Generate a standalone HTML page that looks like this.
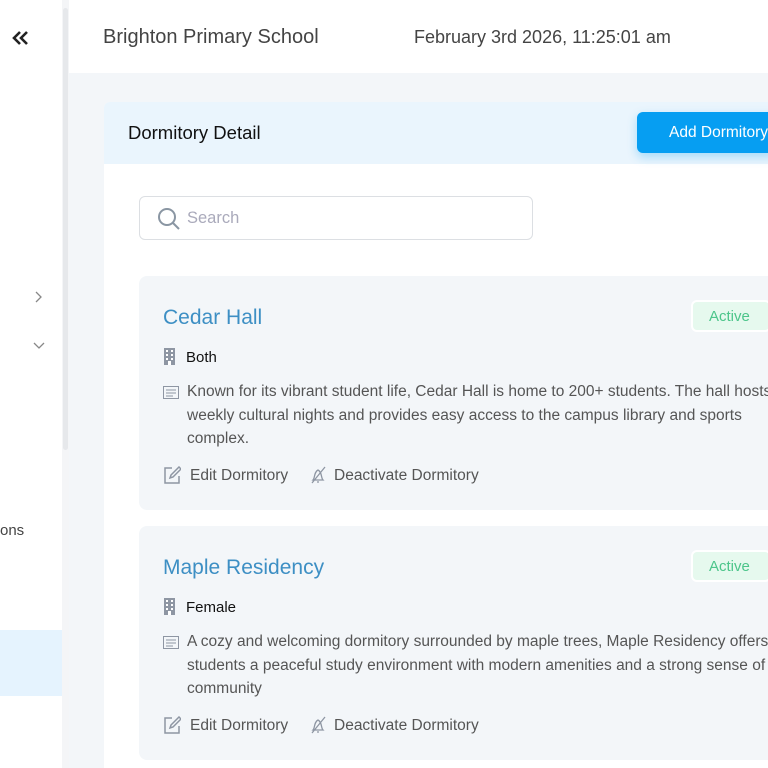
<!DOCTYPE html><html><head><style>
*{margin:0;padding:0;box-sizing:border-box}
html,body{width:768px;height:768px;overflow:hidden}
body{background:#f3f6f9;font-family:"Liberation Sans",sans-serif;position:relative}
.abs{position:absolute}
.side{left:0;top:0;width:62px;height:768px;background:#fff}
.sb{left:62px;top:0;width:7px;height:768px;background:#f4f5f7}
.sbt{left:63px;top:8px;width:5px;height:442px;background:#e6e8eb;border-radius:3px}
.hdr{left:69px;top:0;width:699px;height:73px;background:#fff}
.card{left:104px;top:102px;width:700px;height:666px;background:#fff;border-radius:6px 6px 0 0;overflow:hidden}
.ch{left:0;top:0;width:100%;height:62px;background:#eaf5fd}
.item{left:139px;width:660px;height:234px;background:#f3f6f9;border-radius:8px}
.t{font-size:21px;color:#3d8fc4;left:24px;top:30px}
.badge{left:552px;top:24px;width:80px;height:32px;background:#e6f9ee;border:2px solid #fff;border-radius:6px;color:#4cc58a;font-size:15px;padding:6px 0 0 16px}
.g{left:47px;top:73px;font-size:15px;color:#111}
.d{left:48px;top:104px;white-space:nowrap;font-size:15.5px;line-height:23.5px;color:#555}
.a{top:191px;font-size:15.5px;color:#555}
</style></head><body>
<div class="abs side"></div><div class="abs sb"></div><div class="abs sbt"></div>
<svg class="abs" style="left:11px;top:30px" width="18" height="16"><path d="M9 2L3 8l6 6M16 2l-6 6 6 6" stroke="#222" stroke-width="2.6" fill="none"/></svg>
<svg class="abs" style="left:34px;top:290px" width="10" height="14"><path d="M2 2l5 5-5 5" stroke="#888" stroke-width="1.3" fill="none"/></svg>
<svg class="abs" style="left:32px;top:341px" width="14" height="10"><path d="M2 2l5 5 5-5" stroke="#888" stroke-width="1.3" fill="none"/></svg>
<div class="abs" style="left:0;top:522px;font-size:15px;color:#444">ons</div>
<div class="abs" style="left:0;top:630px;width:62px;height:66px;background:#e5f3fe"></div>
<div class="abs hdr"></div>
<div class="abs" style="left:103px;top:26px;font-size:20px;color:#444">Brighton Primary School</div>
<div class="abs" style="left:414px;top:27px;font-size:18px;color:#444">February 3rd 2026, 11:25:01 am</div>
<div class="abs card"><div class="abs ch"></div>
<div class="abs" style="left:24px;top:20px;font-size:18.5px;color:#111">Dormitory Detail</div>
<div class="abs" style="left:35px;top:94px;width:394px;height:44px;border:1px solid #dcdfe3;border-radius:6px;background:#fff"></div>
<svg class="abs" style="left:52px;top:104px" width="26" height="26"><circle cx="11" cy="11" r="8" stroke="#8a96a3" stroke-width="2" fill="none"/><path d="M17 17l6 6" stroke="#8a96a3" stroke-width="2"/></svg>
<div class="abs" style="left:83px;top:107px;font-size:16.5px;color:#aab">Search</div>
</div>
<div class="abs" style="left:637px;top:112px;width:140px;height:41px;background:#069ef2;border-radius:6px;box-shadow:0 4px 10px rgba(6,158,242,.3);color:#fff;font-size:15.5px;padding:12px 0 0 32px">Add Dormitory</div>
<div class="abs item" style="top:276px">
<div class="abs t">Cedar Hall</div><div class="abs badge">Active</div>
<svg class="abs" style="left:24px;top:72px" width="13" height="17"><rect x="1" y="0" width="11" height="17" fill="#8e96a3"/><g fill="#fff"><rect x="3" y="2" width="2" height="2"/><rect x="8" y="2" width="2" height="2"/><rect x="3" y="6" width="2" height="2"/><rect x="8" y="6" width="2" height="2"/><rect x="3" y="10" width="2" height="2"/><rect x="8" y="10" width="2" height="2"/><rect x="5" y="13" width="3" height="4"/></g></svg>
<div class="abs g">Both</div>
<svg class="abs" style="left:24px;top:110px" width="16" height="13"><rect x="0.5" y="0.5" width="15" height="12" fill="none" stroke="#8e96a3"/><path d="M3 4h10M3 7h10M3 10h7" stroke="#8e96a3"/></svg>
<div class="abs d">Known for its vibrant student life, Cedar Hall is home to 200+ students. The hall hosts<br>weekly cultural nights and provides easy access to the campus library and sports<br>complex.</div>
<svg class="abs" style="left:24px;top:190px" width="18" height="18"><path d="M9 2H2v15h14v-7" fill="none" stroke="#8e96a3" stroke-width="1.5"/><path d="M7 12l1-3 8-8 2 2-8 8z" fill="none" stroke="#8e96a3" stroke-width="1.5"/></svg>
<div class="abs a" style="left:51px">Edit Dormitory</div>
<svg class="abs" style="left:170px;top:190px" width="18" height="18"><path d="M4 14c2-2 1-8 5-10 4 2 3 8 5 10zM8 16h2M3 17L16 1" fill="none" stroke="#8e96a3" stroke-width="1.3"/></svg>
<div class="abs a" style="left:195px">Deactivate Dormitory</div>
</div>
<div class="abs item" style="top:526px">
<div class="abs t">Maple Residency</div><div class="abs badge">Active</div>
<svg class="abs" style="left:24px;top:72px" width="13" height="17"><rect x="1" y="0" width="11" height="17" fill="#8e96a3"/><g fill="#fff"><rect x="3" y="2" width="2" height="2"/><rect x="8" y="2" width="2" height="2"/><rect x="3" y="6" width="2" height="2"/><rect x="8" y="6" width="2" height="2"/><rect x="3" y="10" width="2" height="2"/><rect x="8" y="10" width="2" height="2"/><rect x="5" y="13" width="3" height="4"/></g></svg>
<div class="abs g">Female</div>
<svg class="abs" style="left:24px;top:110px" width="16" height="13"><rect x="0.5" y="0.5" width="15" height="12" fill="none" stroke="#8e96a3"/><path d="M3 4h10M3 7h10M3 10h7" stroke="#8e96a3"/></svg>
<div class="abs d">A cozy and welcoming dormitory surrounded by maple trees, Maple Residency offers<br>students a peaceful study environment with modern amenities and a strong sense of<br>community</div>
<svg class="abs" style="left:24px;top:190px" width="18" height="18"><path d="M9 2H2v15h14v-7" fill="none" stroke="#8e96a3" stroke-width="1.5"/><path d="M7 12l1-3 8-8 2 2-8 8z" fill="none" stroke="#8e96a3" stroke-width="1.5"/></svg>
<div class="abs a" style="left:51px">Edit Dormitory</div>
<svg class="abs" style="left:170px;top:190px" width="18" height="18"><path d="M4 14c2-2 1-8 5-10 4 2 3 8 5 10zM8 16h2M3 17L16 1" fill="none" stroke="#8e96a3" stroke-width="1.3"/></svg>
<div class="abs a" style="left:195px">Deactivate Dormitory</div>
</div>
</body></html>
